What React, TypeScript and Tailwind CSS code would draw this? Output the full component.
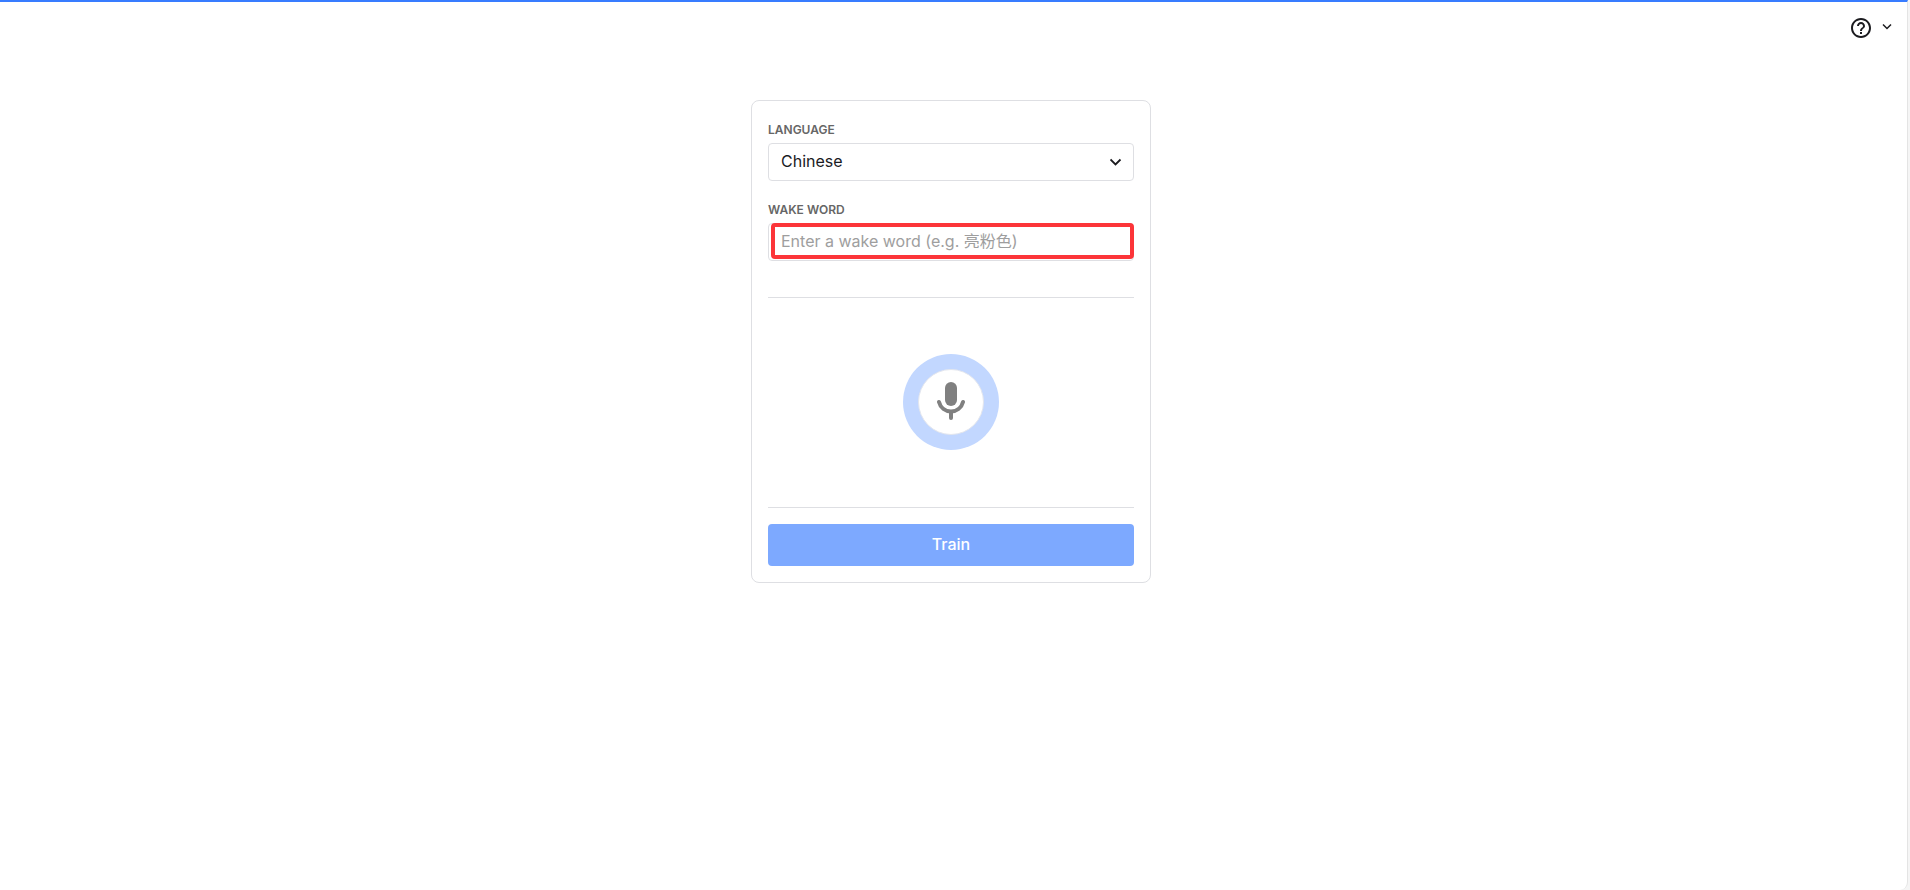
import React, { useState } from "react";

interface FieldProps {
  id: string;
  label: string;
  children: React.ReactNode;
}

const Field: React.FC<FieldProps> = ({ id, label, children }) => {
  return (
    <div className="flex flex-col">
      <label htmlFor={id} className="mb-0.5 text-xs leading-[22px] font-semibold text-[#666666] uppercase">
        {label}
      </label>
      {children}
    </div>
  );
};

const HelpMenu: React.FC = () => {
  return (
    <button type="button" aria-label="Help" className="flex items-center gap-2 text-[#1b1b1f]">
      <svg className="size-6" viewBox="0 0 24 24" fill="currentColor">
        <path d="M11 18h2v-2h-2v2zm1-16C6.48 2 2 6.48 2 12s4.48 10 10 10 10-4.48 10-10S17.52 2 12 2zm0 18c-4.41 0-8-3.59-8-8s3.59-8 8-8 8 3.59 8 8-3.59 8-8 8zm0-14c-2.21 0-4 1.79-4 4h2c0-1.100.9-2 2-2s2 .9 2 2c0 2-3 1.750-3 5h2c0-2.250 3-2.500 3-5 0-2.210-1.790-4-4-4z" />
      </svg>
      <svg className="mb-1 h-2 w-3" viewBox="0 0 12 8" fill="none" stroke="currentColor" strokeWidth="1.5">
        <path d="M2 2.500 6 6.500l4-4" />
      </svg>
    </button>
  );
};

const Recorder: React.FC = () => {
  return (
    <div className="flex h-[209px] items-center justify-center pb-0.5">
      <button
        type="button"
        aria-label="Record"
        className="flex size-24 items-center justify-center rounded-full bg-[#c2d7ff]"
      >
        <span className="flex size-[66px] items-center justify-center rounded-full border border-[#e3e6ee] bg-white pb-0.5">
          <svg className="h-[38px] w-7" viewBox="0 0 28 38" fill="none" stroke="#808080" strokeWidth="4" strokeLinecap="round">
            <rect x="8" y="0" width="12" height="24" rx="6" fill="#808080" stroke="none" />
            <path d="M2 20c1.500 6 6.500 9.500 12 9.500S24.500 26 26 20" />
            <path d="M14 30v6" />
          </svg>
        </span>
      </button>
    </div>
  );
};

const App: React.FC = () => {
  const [language, setLanguage] = useState("Chinese");
  const [wakeWord, setWakeWord] = useState("");

  return (
    <div className="min-h-screen bg-[#f5f5f5] pr-0.5 font-[Inter,'Noto_Sans_CJK_SC',sans-serif] text-base text-[#1b1b1f]">
      <div className="min-h-screen rounded-br-lg border-t-2 border-r border-t-[#387cff] border-r-[#e4e4e4] bg-white">
        <header className="flex justify-end pt-3.5 pr-3.5">
          <HelpMenu />
        </header>
        <main className="flex justify-center pt-[60px] pr-[5px]">
          <form className="w-full max-w-[400px] rounded-lg border border-[#dedfe3] px-4 pt-[18px] pb-4">
            <Field id="language" label="Language">
              <div className="grid items-center">
                <select
                  id="language"
                  value={language}
                  onChange={(e) => setLanguage(e.target.value)}
                  className="col-start-1 row-start-1 h-[38px] appearance-none rounded border border-[#dedfe3] bg-white px-3 pb-0.5"
                >
                  <option>Chinese</option>
                  <option>English</option>
                </select>
                <svg
                  className="pointer-events-none col-start-1 row-start-1 mr-3 h-2 w-3 justify-self-end"
                  viewBox="0 0 12 8"
                  fill="none"
                  stroke="currentColor"
                  strokeWidth="1.8"
                >
                  <path d="m.5 1.500 5 5 5-5" />
                </svg>
              </div>
            </Field>
            <div className="mt-[18px]">
              <Field id="wake-word" label="Wake word">
                <div className="relative">
                  <input
                    id="wake-word"
                    type="text"
                    value={wakeWord}
                    onChange={(e) => setWakeWord(e.target.value)}
                    placeholder="Enter a wake word (e.g. 亮粉色)"
                    className="h-[38px] w-full rounded border border-[#dedfe3] px-3 pb-0.5 placeholder:text-[#9e9e9e]"
                  />
                  <div className="pointer-events-none absolute top-0 right-0 bottom-0.5 left-[3px] rounded border-4 border-[#fc3539]" />
                </div>
              </Field>
            </div>
            <hr className="mt-9 border-[#dedfe3]" />
            <Recorder />
            <hr className="border-[#dedfe3]" />
            <button type="submit" disabled className="mt-4 h-[42px] w-full rounded bg-[#7da9ff] pb-0.5 font-medium text-white">
              Train
            </button>
          </form>
        </main>
      </div>
    </div>
  );
};

export default App;
